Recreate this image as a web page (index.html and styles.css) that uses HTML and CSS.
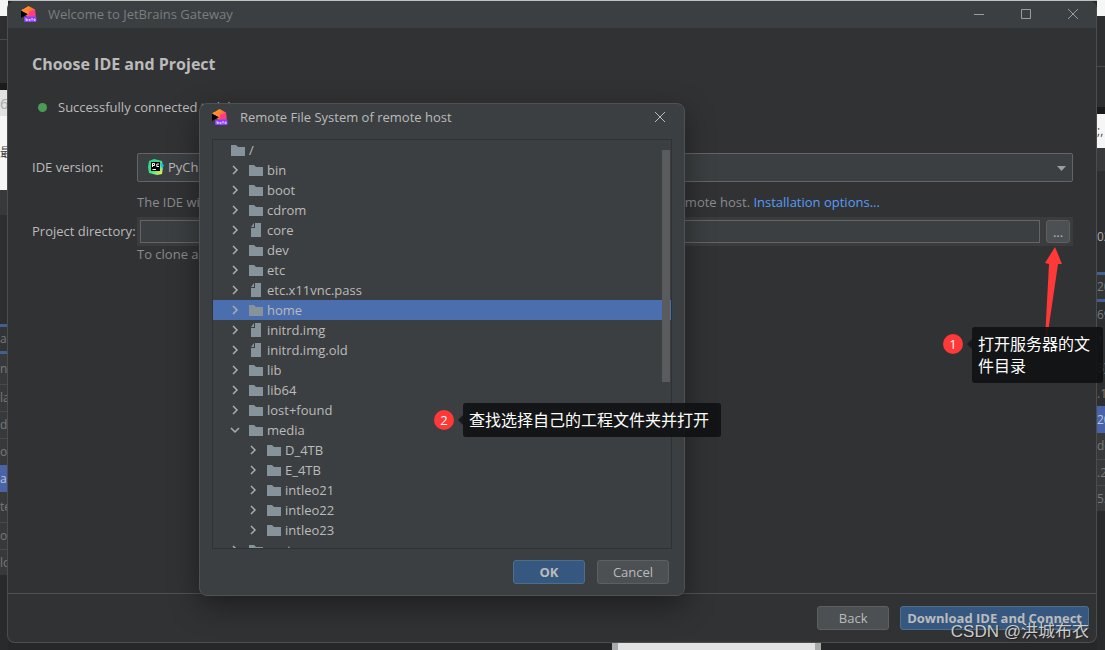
FILE: index.html
```html
<!DOCTYPE html>
<html lang="en">
<head>
<meta charset="utf-8">
<title>Welcome to JetBrains Gateway</title>
<link rel="stylesheet" href="styles.css">
</head>
<body>
<svg class="defs" aria-hidden="true">
  <defs>
    <linearGradient id="hot" x1="0" y1="0" x2="1" y2="1"><stop offset="0" stop-color="#ffb21a"/><stop offset=".45" stop-color="#ff7a2e"/><stop offset="1" stop-color="#ff2d90"/></linearGradient>
    <linearGradient id="lime" x1="0" y1="0" x2="1" y2="1"><stop offset="0" stop-color="#21d789"/><stop offset=".5" stop-color="#3be08a"/><stop offset="1" stop-color="#fcf84a"/></linearGradient>
    <symbol id="gateway" viewBox="0 0 16 16">
      <path d="M7.500 0 L14 3.500 14.500 11 7 12 1 4Z" fill="url(#hot)"/>
      <path d="M8 6 L14 3.500 14.500 11 8 11Z" fill="#ff3d86"/>
      <path d="M0 4.500 L7 8 0 12Z" fill="#000"/>
      <path d="M0 4.500 L2 3 8 6 7 8Z" fill="#ff8a3a"/>
      <rect x="3" y="10.500" width="12.500" height="5.500" rx="1" fill="#8a3ffc"/>
      <path d="M5 12v2.500h1.500v-1.200H5M8 13.500h1.500M8 13v1.700h1.500M11 12v2.600M10.400 13h1.500M13 13h1.200v1.600H13z" fill="none" stroke="#fff" stroke-width=".6"/>
    </symbol>
    <symbol id="folder" viewBox="0 0 14 11"><path d="M0 0H5L7 2H14V11H0Z" fill="#87939a"/></symbol>
    <symbol id="file" viewBox="0 0 14 14"><path d="M6 0H12V14H2V5H6Z" fill="#87939a"/><path d="M5 0V4H2Z" fill="#87939a"/></symbol>
    <symbol id="right" viewBox="0 0 10 10"><path d="M3 1L7 5L3 9" fill="none" stroke="#adadad" stroke-width="1.500"/></symbol>
    <symbol id="down" viewBox="0 0 10 10"><path d="M1 3L5 7L9 3" fill="none" stroke="#adadad" stroke-width="1.500"/></symbol>
    <symbol id="cross" viewBox="0 0 10 10"><path d="M0 0L10 10M10 0L0 10" fill="none" stroke="currentColor"/></symbol>
  </defs>
</svg>

<div class="desktop">
  <div class="top-edge"></div>
  <div class="edge edge-left" aria-hidden="true">
    <i class="seg white h16"></i><i class="seg dark h24 line"></i><i class="seg dark h43"></i><i class="seg black h7"></i>
    <i class="seg pale h26">69</i><i class="seg white h74 ink">最</i><i class="seg panel h25"></i><i class="seg dark h109"></i>
    <i class="seg focus h30">ad</i><i class="seg panel h31 line">nl</i><i class="seg panel h27 line">la</i><i class="seg panel h27 line">d</i><i class="seg panel h26">oa</i>
    <i class="seg chosen h27">ad</i><i class="seg panel h31 line">te</i><i class="seg panel h27 line">oa</i><i class="seg panel h25">lo</i>
  </div>

  <main class="window">
    <header class="titlebar">
      <svg class="logo"><use href="#gateway"/></svg>
      <span class="titlebar-text">Welcome to JetBrains Gateway</span>
      <button class="win-btn" aria-label="Minimize"><svg width="10" height="10" viewBox="0 0 10 10"><path d="M0 5.500H10" stroke="currentColor"/></svg></button>
      <button class="win-btn" aria-label="Maximize"><svg width="10" height="10" viewBox="0 0 10 10"><path d="M.5.5H9.500V9.500H.5Z" fill="none" stroke="currentColor"/></svg></button>
      <button class="win-btn" aria-label="Close"><svg width="10" height="10"><use href="#cross"/></svg></button>
    </header>

    <section class="content">
      <h1>Choose IDE and Project</h1>
      <p class="status"><span class="dot"></span>Successfully connected to labs: 21.5.198.168.1.200:22</p>
      <div class="form">
        <label for="ide">IDE version:</label>
        <div class="select-box">
          <svg class="pycharm" viewBox="0 0 16 16"><path d="M1 2L6 0 14 2 15 8 14 15 9 16 1 14 0 8Z" fill="url(#lime)"/><path d="M12 4L16 6 14 10Z" fill="#07c3f2"/><path d="M3 3H12V12H3Z" fill="#000"/><path d="M4.500 8V4.500H6.500V6.500H4.500M11 5H8.800V7.500H11M4.500 10.500H8" fill="none" stroke="#fff"/></svg>
          <select id="ide"><option>PyCharm 2021.3.3 (Professional Edition)</option></select>
          <svg class="caret" viewBox="0 0 9 5"><path d="M0 0H9L4.500 5Z" fill="#9a9da0"/></svg>
        </div>
        <p class="hint">The IDE will be downloaded and installed to ~/.cache/JetBrains/RemoteDev/dist/ij on the remote host. <a href="#">Installation options...</a></p>
        <label for="dir">Project directory:</label>
        <div class="dir-box"><input id="dir" type="text"><button class="btn browse" aria-label="Browse">...</button></div>
        <p class="hint hint-low">To clone a repository, open the terminal</p>
      </div>
    </section>

    <footer class="actions">
      <button class="btn wide">Back</button>
      <button class="btn primary">Download IDE and Connect</button>
    </footer>
  </main>

  <div class="edge edge-right" aria-hidden="true">
    <i class="seg white h16"></i><i class="seg dark h51 line"></i><i class="seg dark h40"></i><i class="seg black h7"></i>
    <i class="seg white h34 ink">;,</i><i class="seg panel h23"></i><i class="seg dark h31"></i><i class="seg dark h70 lit">02</i>
    <i class="seg focus h30">20</i><i class="seg dark h25">69</i><i class="seg dark h27">1</i><i class="seg dark h27">3)</i><i class="seg dark h25">.1</i>
    <i class="seg chosen h27">20</i><i class="seg panel h27 line">de</i><i class="seg panel h26 line">.2</i><i class="seg panel h25">5.</i>
  </div>
  <div class="bottom-edge"><div class="sheet"></div></div>

  <section class="dialog" role="dialog" aria-labelledby="dialog-title">
    <header class="dialog-head">
      <svg class="logo"><use href="#gateway"/></svg>
      <h2 id="dialog-title">Remote File System of remote host</h2>
      <button class="win-btn" aria-label="Close dialog"><svg width="10" height="10"><use href="#cross"/></svg></button>
    </header>
    <div class="tree-box">
      <ul class="tree">
        <li class="row root"><svg class="folder"><use href="#folder"/></svg>/</li>
        <li class="row"><svg class="arrow"><use href="#right"/></svg><svg class="folder"><use href="#folder"/></svg>bin</li>
        <li class="row"><svg class="arrow"><use href="#right"/></svg><svg class="folder"><use href="#folder"/></svg>boot</li>
        <li class="row"><svg class="arrow"><use href="#right"/></svg><svg class="folder"><use href="#folder"/></svg>cdrom</li>
        <li class="row"><svg class="arrow"><use href="#right"/></svg><svg class="file"><use href="#file"/></svg>core</li>
        <li class="row"><svg class="arrow"><use href="#right"/></svg><svg class="folder"><use href="#folder"/></svg>dev</li>
        <li class="row"><svg class="arrow"><use href="#right"/></svg><svg class="folder"><use href="#folder"/></svg>etc</li>
        <li class="row"><svg class="arrow"><use href="#right"/></svg><svg class="file"><use href="#file"/></svg>etc.x11vnc.pass</li>
        <li class="row selected"><svg class="arrow"><use href="#right"/></svg><svg class="folder"><use href="#folder"/></svg>home</li>
        <li class="row"><svg class="arrow"><use href="#right"/></svg><svg class="file"><use href="#file"/></svg>initrd.img</li>
        <li class="row"><svg class="arrow"><use href="#right"/></svg><svg class="file"><use href="#file"/></svg>initrd.img.old</li>
        <li class="row"><svg class="arrow"><use href="#right"/></svg><svg class="folder"><use href="#folder"/></svg>lib</li>
        <li class="row"><svg class="arrow"><use href="#right"/></svg><svg class="folder"><use href="#folder"/></svg>lib64</li>
        <li class="row"><svg class="arrow"><use href="#right"/></svg><svg class="folder"><use href="#folder"/></svg>lost+found</li>
        <li class="row"><svg class="arrow"><use href="#down"/></svg><svg class="folder"><use href="#folder"/></svg>media</li>
        <li class="row child"><svg class="arrow"><use href="#right"/></svg><svg class="folder"><use href="#folder"/></svg>D_4TB</li>
        <li class="row child"><svg class="arrow"><use href="#right"/></svg><svg class="folder"><use href="#folder"/></svg>E_4TB</li>
        <li class="row child"><svg class="arrow"><use href="#right"/></svg><svg class="folder"><use href="#folder"/></svg>intleo21</li>
        <li class="row child"><svg class="arrow"><use href="#right"/></svg><svg class="folder"><use href="#folder"/></svg>intleo22</li>
        <li class="row child"><svg class="arrow"><use href="#right"/></svg><svg class="folder"><use href="#folder"/></svg>intleo23</li>
        <li class="row"><svg class="arrow"><use href="#right"/></svg><svg class="folder"><use href="#folder"/></svg>mnt</li>
      </ul>
      <div class="thumb"></div>
    </div>
    <footer class="dialog-actions">
      <button class="btn wide primary">OK</button>
      <button class="btn wide">Cancel</button>
    </footer>
  </section>

  <svg class="pointer" viewBox="0 0 18 92" aria-hidden="true"><path d="M10 0L17 17H13L2 92H0L4 17L0 16Z" fill="#ff3838"/></svg>
  <div class="note note-one" lang="zh"><span class="badge">1</span><p class="bubble">打开服务器的文件目录</p></div>
  <div class="note note-two" lang="zh"><span class="badge">2</span><p class="bubble">查找选择自己的工程文件夹并打开</p></div>
  <div class="watermark" lang="zh">CSDN @洪城布衣</div>
</div>
</body>
</html>
```

FILE: styles.css
```css
* { box-sizing: border-box; }
body {
  margin: 0;
  background: #28292a;
  color: #bbbbbb;
  font: 13px/20px "Open Sans", "Noto Sans CJK SC", sans-serif;
}
h1, h2, p, ul { margin: 0; padding: 0; }
button, input, select { font: inherit; color: inherit; margin: 0; }
.defs { position: absolute; width: 0; height: 0; }

.desktop {
  position: relative;
  display: grid;
  grid-template: 1px 1fr 7px / 8px minmax(0, 1fr) 8px;
  min-height: 100vh;
  overflow: hidden;
}
.top-edge { grid-area: 1 / 1 / 2 / 4; background: #bfc3c0; }
.edge { grid-row: 1 / 4; display: flex; flex-direction: column; overflow: hidden; background: #292a2b; }
.edge-left { grid-column: 1; }
.edge-right { grid-column: 3; }
.bottom-edge { grid-area: 3 / 2; display: flex; background: #262728; }
.sheet { width: 209px; margin-left: 604px; background: #e2e2e2; border: solid #aaaaaa; border-width: 0 6px; }

.seg {
  flex: none;
  display: flex;
  align-items: center;
  overflow: hidden;
  font-style: normal;
  font-size: 12px;
  color: #77797a;
}
.white { background: #f6f6f6; }
.pale { background: #e2e2e2; font-size: 15px; color: #aaaaaa; }
.dark { background: #2d2e30; }
.black { background: #1b1b1b; }
.panel { background: #37393a; }
.line { border-bottom: 1px solid #48494a; }
.focus { background: #323436; border: solid #41608f; border-width: 3px 0; }
.chosen { background: #4a63a8; color: #b9c3dc; }
.ink { color: #444444; }
.lit { color: #aaaaaa; }
.h7 { height: 7px; } .h16 { height: 16px; } .h23 { height: 23px; } .h24 { height: 24px; }
.h25 { height: 25px; } .h26 { height: 26px; } .h27 { height: 27px; } .h30 { height: 30px; }
.h31 { height: 31px; } .h34 { height: 34px; } .h40 { height: 40px; } .h43 { height: 43px; }
.h51 { height: 51px; } .h70 { height: 70px; } .h74 { height: 74px; } .h109 { height: 109px; }

.window {
  grid-area: 2 / 2;
  display: flex;
  flex-direction: column;
  background: #313234;
  border: 1px solid #4b4d4e;
  border-top: 0;
  border-radius: 8px;
  margin-left: -1px;
  overflow: hidden;
}
.titlebar { display: flex; align-items: center; height: 27px; padding: 0 0 1px 13px; background: #3c3f41; color: #7b7d7e; }
.logo { width: 16px; height: 16px; flex: none; }
.titlebar-text { flex: 1; padding-left: 11px; }
.win-btn {
  display: grid;
  place-items: center;
  width: 47px;
  height: 26px;
  padding: 0;
  border: 0;
  background: none;
  color: #9a9c9d;
}
.content { flex: 1; padding: 24px 23px 0 24px; }
h1 { font-size: 16px; line-height: 24px; font-weight: 700; }
.status { display: flex; align-items: center; padding: 20px 0 0 6px; line-height: 22px; white-space: nowrap; }
.dot { width: 9px; height: 9px; margin-right: 11px; border-radius: 50%; background: #499c54; }
.form {
  display: grid;
  grid-template-columns: 105px minmax(0, 1fr);
  align-items: center;
  padding-top: 35px;
}
.form label { padding-bottom: 2px; }
.select-box { position: relative; }
.select-box select {
  display: block;
  width: 100%;
  height: 29px;
  padding: 0 30px 2px;
  appearance: none;
  background: #3c3f41;
  border: 1px solid #646566;
  border-radius: 2px;
}
.pycharm { position: absolute; left: 11px; top: 6px; width: 16px; height: 16px; }
.caret { position: absolute; right: 7px; top: 13px; width: 9px; height: 5px; }
.hint { grid-column: 2; padding: 10px 0 5px; color: #8a8c8d; white-space: nowrap; }
.hint-low { padding: 0; line-height: 16px; }
.hint a { color: #589df6; text-decoration: none; }
.dir-box { display: flex; gap: 6px; padding: 3px; background: #3a3c3e; }
.dir-box input { flex: 1; min-width: 0; height: 23px; background: #3c3f41; border: 1px solid #646566; border-radius: 0; }

.btn {
  height: 24px;
  padding: 0 6px;
  background: #4c5052;
  border: 1px solid #5e6060;
  border-radius: 3px;
  line-height: 20px;
  white-space: nowrap;
}
.browse { width: 24px; height: 23px; padding: 0; }
.wide { width: 72px; }
.primary { background: #365880; border-color: #4c708c; font-weight: 700; }
.actions { display: flex; justify-content: flex-end; gap: 11px; padding: 12px 7px; border-top: 1px solid #505253; }

.dialog {
  position: absolute;
  left: 199px;
  top: 103px;
  width: 486px;
  display: flex;
  flex-direction: column;
  padding: 0 12px 11px;
  background: #3c3f41;
  border: 1px solid #4f5152;
  border-radius: 8px;
  box-shadow: 0 10px 30px rgba(0, 0, 0, .4);
}
.dialog-head { display: flex; align-items: center; height: 26px; }
.dialog-head h2 { flex: 1; padding-left: 12px; font-size: 13px; font-weight: 400; }
.dialog-head .win-btn { width: 24px; color: #bbbbbb; }
.tree-box { position: relative; height: 410px; margin-top: 9px; border: 1px solid #2f3132; overflow: hidden; }
.tree { list-style: none; }
.row { display: flex; align-items: center; height: 20px; padding-left: 17px; }
.root { padding-left: 18px; }
.child { padding-left: 35px; }
.selected { background: #4b6eaf; }
.arrow { width: 10px; height: 10px; margin-right: 9px; }
.folder { width: 14px; height: 11px; margin-right: 4px; }
.file { width: 14px; height: 14px; margin-right: 4px; }
.thumb { position: absolute; right: 1px; top: 10px; width: 8px; height: 232px; background: #595b5d; }
.dialog-actions { display: flex; justify-content: flex-end; gap: 12px; padding: 11px 3px 0 0; }

.note { position: absolute; display: flex; align-items: center; gap: 9px; color: #ffffff; }
.note-one { left: 943px; top: 327px; width: 160px; align-items: flex-start; }
.note-one .badge { margin-top: 7px; }
.note-two { left: 434px; top: 403px; }
.badge { flex: none; width: 20px; height: 20px; border-radius: 50%; background: #ff3838; text-align: center; }
.bubble {
  position: relative;
  padding: 5px 12px 7px 6px;
  border-radius: 3px;
  background: rgba(16, 17, 18, .9);
  font: 16px/22px "Noto Sans CJK SC", sans-serif;
}
.bubble::before {
  content: "";
  position: absolute;
  left: -5px;
  top: 12px;
  border: solid transparent;
  border-width: 5px 5px 5px 0;
  border-right-color: #18191a;
}
.pointer { position: absolute; left: 1045px; top: 247px; width: 18px; height: 92px; }
.watermark {
  position: absolute;
  right: 16px;
  bottom: 6px;
  color: #c9cbcc;
  font: 17px/24px "Liberation Sans", "Noto Sans CJK SC", sans-serif;
  text-shadow: 1px 1px 1px #222222;
}
```
